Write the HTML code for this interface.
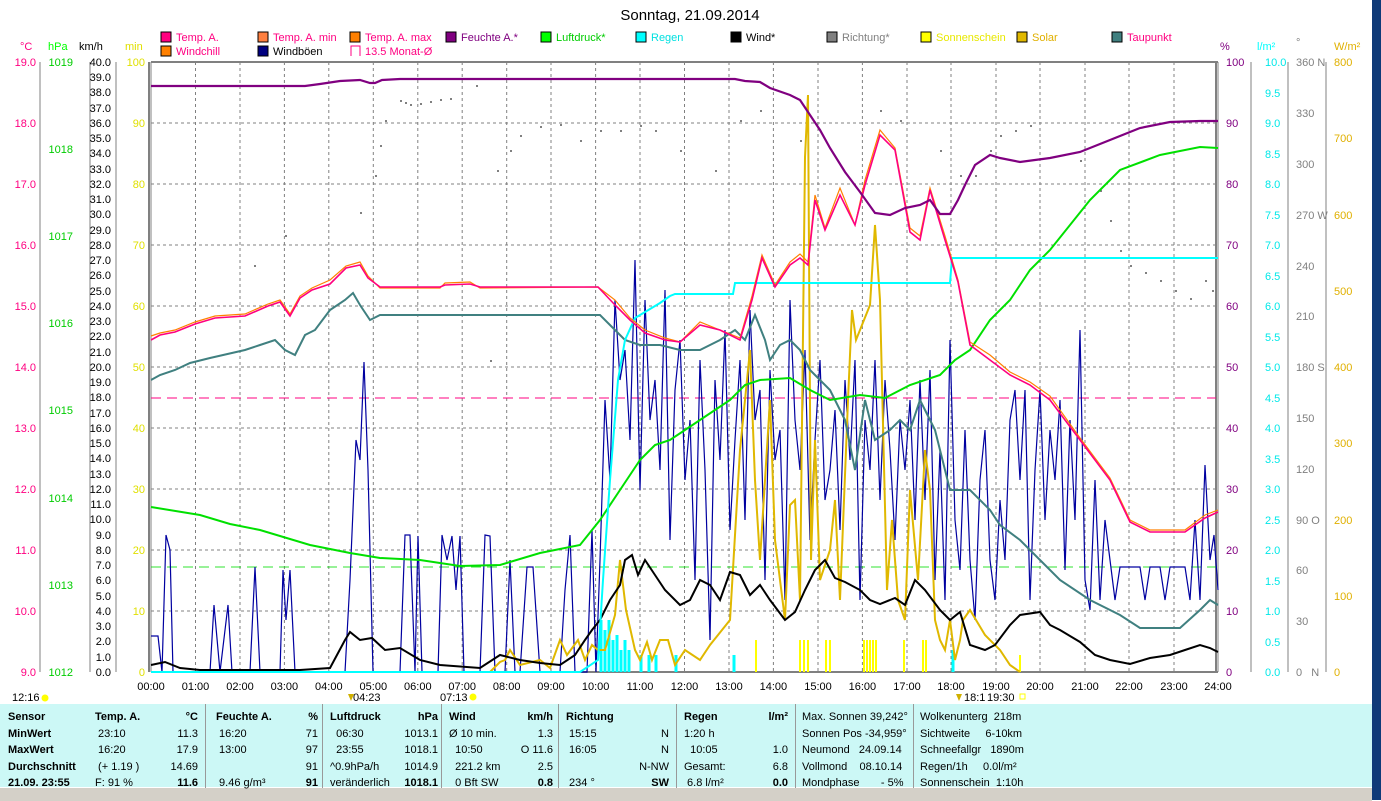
<!DOCTYPE html>
<html><head><meta charset="utf-8"><style>
body{margin:0;width:1381px;height:800px;background:#fff;overflow:hidden;position:relative;font-family:"Liberation Sans",sans-serif}
svg{position:absolute;left:0;top:0}
.t{position:absolute;font-size:11px;white-space:nowrap;line-height:16.5px}
.b{font-weight:bold}
</style></head><body>
<div style="position:absolute;left:0;top:704px;width:1372px;height:84px;background:#ccf8f6"></div>
<div style="position:absolute;left:0;top:787px;width:1372px;height:13px;background:#d4d0c8;border-top:1px solid #fff"></div>
<svg width="1381" height="800" font-family="Liberation Sans, sans-serif" font-size="11">
<rect x="1372" y="0" width="9" height="800" fill="#0f3a78"/>
<text x="690" y="20" font-size="15" text-anchor="middle">Sonntag, 21.09.2014</text>
<g font-size="11">
<rect x="161" y="32" width="10" height="10" fill="#ff0080" stroke="#000"/><text x="176" y="41" fill="#ff0080">Temp. A.</text>
<rect x="258" y="32" width="10" height="10" fill="#ff8040" stroke="#000"/><text x="273" y="41" fill="#ff0080">Temp. A. min</text>
<rect x="350" y="32" width="10" height="10" fill="#ff8000" stroke="#000"/><text x="365" y="41" fill="#ff0080">Temp. A. max</text>
<rect x="446" y="32" width="10" height="10" fill="#800080" stroke="#000"/><text x="461" y="41" fill="#800080">Feuchte A.*</text>
<rect x="541" y="32" width="10" height="10" fill="#00ff00" stroke="#000"/><text x="556" y="41" fill="#00cc00">Luftdruck*</text>
<rect x="636" y="32" width="10" height="10" fill="#00ffff" stroke="#000"/><text x="651" y="41" fill="#00e0e0">Regen</text>
<rect x="731" y="32" width="10" height="10" fill="#000" stroke="#000"/><text x="746" y="41">Wind*</text>
<rect x="827" y="32" width="10" height="10" fill="#808080" stroke="#000"/><text x="842" y="41" fill="#808080">Richtung*</text>
<rect x="921" y="32" width="10" height="10" fill="#ffff00" stroke="#000"/><text x="936" y="41" fill="#e8e800">Sonnenschein</text>
<rect x="1017" y="32" width="10" height="10" fill="#e0b800" stroke="#000"/><text x="1032" y="41" fill="#e0b000">Solar</text>
<rect x="1112" y="32" width="10" height="10" fill="#408080" stroke="#000"/><text x="1127" y="41" fill="#ff0080">Taupunkt</text>
<rect x="161" y="46" width="10" height="10" fill="#ff8000" stroke="#000"/><text x="176" y="55" fill="#ff0080">Windchill</text>
<rect x="258" y="46" width="10" height="10" fill="#000080" stroke="#000"/><text x="273" y="55">Windböen</text>
<path d="M351 56V46h9v10" fill="none" stroke="#ff0080"/><text x="365" y="55" fill="#ff0080">13.5 Monat-Ø</text>
</g>
<text x="20" y="50" fill="#ff0080">°C</text><text x="48" y="50" fill="#00ff00">hPa</text><text x="79" y="50">km/h</text><text x="125" y="50" fill="#e0e000">min</text>
<text x="1220" y="50" fill="#800080">%</text><text x="1257" y="50" fill="#00ffff">l/m²</text><text x="1296" y="46" fill="#808080">°</text><text x="1334" y="50" fill="#e0b000">W/m²</text>
<g stroke="#808080" fill="none">
<path d="M40 62V672M90 62V672M116 62V672M151 62V672M1218 62V672M1251 62V672M1288 62V672M1326 62V672"/>
<path d="M151 62H1218M151 672H1218M149 62V672M1216 62V672" stroke-width="2"/>
</g>
<g stroke="#808080" stroke-dasharray="3,3" fill="none">
<path d="M151 123H1216M151 184H1216M151 245H1216M151 306H1216M151 367H1216M151 428H1216M151 489H1216M151 550H1216M151 611H1216"/>
<path d="M195.5 62V672M240 62V672M284.4 62V672M328.8 62V672M373.3 62V672M417.8 62V672M462.2 62V672M506.7 62V672M551 62V672M595.6 62V672M640 62V672M684.5 62V672M729 62V672M773.4 62V672M818 62V672M862.4 62V672M907 62V672M951 62V672M996 62V672M1040 62V672M1085 62V672M1129 62V672M1174 62V672"/>
</g>
<path d="M151 398H1216" stroke="#ff0080" stroke-dasharray="10,6"/>
<path d="M151 567H1216" stroke="#00dd00" stroke-dasharray="10,6" opacity=".8"/>
<g font-size="11" text-anchor="end">
<g fill="#ff0080"><text x="36" y="66">19.0</text><text x="36" y="127">18.0</text><text x="36" y="188">17.0</text><text x="36" y="249">16.0</text><text x="36" y="310">15.0</text><text x="36" y="371">14.0</text><text x="36" y="432">13.0</text><text x="36" y="493">12.0</text><text x="36" y="554">11.0</text><text x="36" y="615">10.0</text><text x="36" y="676">9.0</text></g>
<g fill="#00cc00"><text x="73" y="66">1019</text><text x="73" y="153">1018</text><text x="73" y="240">1017</text><text x="73" y="327">1016</text><text x="73" y="414">1015</text><text x="73" y="502">1014</text><text x="73" y="589">1013</text><text x="73" y="676">1012</text></g>
<g fill="#e0e000"><text x="145" y="66">100</text><text x="145" y="127">90</text><text x="145" y="188">80</text><text x="145" y="249">70</text><text x="145" y="310">60</text><text x="145" y="371">50</text><text x="145" y="432">40</text><text x="145" y="493">30</text><text x="145" y="554">20</text><text x="145" y="615">10</text><text x="145" y="676">0</text></g>
</g>
<g fill="#000" font-size="11" text-anchor="end">
<text x="111" y="66">40.0</text><text x="111" y="81">39.0</text><text x="111" y="96">38.0</text><text x="111" y="112">37.0</text><text x="111" y="127">36.0</text><text x="111" y="142">35.0</text><text x="111" y="157">34.0</text><text x="111" y="173">33.0</text><text x="111" y="188">32.0</text><text x="111" y="203">31.0</text><text x="111" y="218">30.0</text><text x="111" y="234">29.0</text><text x="111" y="249">28.0</text><text x="111" y="264">27.0</text><text x="111" y="279">26.0</text><text x="111" y="295">25.0</text><text x="111" y="310">24.0</text><text x="111" y="325">23.0</text><text x="111" y="340">22.0</text><text x="111" y="356">21.0</text><text x="111" y="371">20.0</text><text x="111" y="386">19.0</text><text x="111" y="401">18.0</text><text x="111" y="417">17.0</text><text x="111" y="432">16.0</text><text x="111" y="447">15.0</text><text x="111" y="462">14.0</text><text x="111" y="478">13.0</text><text x="111" y="493">12.0</text><text x="111" y="508">11.0</text><text x="111" y="523">10.0</text><text x="111" y="539">9.0</text><text x="111" y="554">8.0</text><text x="111" y="569">7.0</text><text x="111" y="584">6.0</text><text x="111" y="600">5.0</text><text x="111" y="615">4.0</text><text x="111" y="630">3.0</text><text x="111" y="645">2.0</text><text x="111" y="661">1.0</text><text x="111" y="676">0.0</text>
</g>
<g font-size="11">
<g fill="#800080"><text x="1226" y="66">100</text><text x="1226" y="127">90</text><text x="1226" y="188">80</text><text x="1226" y="249">70</text><text x="1226" y="310">60</text><text x="1226" y="371">50</text><text x="1226" y="432">40</text><text x="1226" y="493">30</text><text x="1226" y="554">20</text><text x="1226" y="615">10</text><text x="1226" y="676">0</text></g>
<g fill="#00e8e8"><text x="1265" y="66">10.0</text><text x="1265" y="97">9.5</text><text x="1265" y="127">9.0</text><text x="1265" y="158">8.5</text><text x="1265" y="188">8.0</text><text x="1265" y="219">7.5</text><text x="1265" y="249">7.0</text><text x="1265" y="280">6.5</text><text x="1265" y="310">6.0</text><text x="1265" y="341">5.5</text><text x="1265" y="371">5.0</text><text x="1265" y="402">4.5</text><text x="1265" y="432">4.0</text><text x="1265" y="463">3.5</text><text x="1265" y="493">3.0</text><text x="1265" y="524">2.5</text><text x="1265" y="554">2.0</text><text x="1265" y="585">1.5</text><text x="1265" y="615">1.0</text><text x="1265" y="646">0.5</text><text x="1265" y="676">0.0</text></g>
<g fill="#808080"><text x="1296" y="66">360 N</text><text x="1296" y="117">330</text><text x="1296" y="168">300</text><text x="1296" y="219">270 W</text><text x="1296" y="270">240</text><text x="1296" y="320">210</text><text x="1296" y="371">180 S</text><text x="1296" y="422">150</text><text x="1296" y="473">120</text><text x="1296" y="524">90 O</text><text x="1296" y="574">60</text><text x="1296" y="625">30</text><text x="1296" y="676">0 &#160; N</text></g>
<g fill="#e0b000"><text x="1334" y="66">800</text><text x="1334" y="142">700</text><text x="1334" y="219">600</text><text x="1334" y="295">500</text><text x="1334" y="371">400</text><text x="1334" y="447">300</text><text x="1334" y="524">200</text><text x="1334" y="600">100</text><text x="1334" y="676">0</text></g>
</g>
<g font-size="11" text-anchor="middle">
<text x="151" y="690">00:00</text><text x="195.5" y="690">01:00</text><text x="240" y="690">02:00</text><text x="284.4" y="690">03:00</text><text x="328.8" y="690">04:00</text><text x="373.3" y="690">05:00</text><text x="417.8" y="690">06:00</text><text x="462.2" y="690">07:00</text><text x="506.7" y="690">08:00</text><text x="551" y="690">09:00</text><text x="595.6" y="690">10:00</text><text x="640" y="690">11:00</text><text x="684.5" y="690">12:00</text><text x="729" y="690">13:00</text><text x="773.4" y="690">14:00</text><text x="818" y="690">15:00</text><text x="862.4" y="690">16:00</text><text x="907" y="690">17:00</text><text x="951" y="690">18:00</text><text x="996" y="690">19:00</text><text x="1040" y="690">20:00</text><text x="1085" y="690">21:00</text><text x="1129" y="690">22:00</text><text x="1174" y="690">23:00</text><text x="1218" y="690">24:00</text>
</g>
<g font-size="11">
<text x="12" y="701">12:16</text><circle cx="45" cy="698" r="3.5" fill="#ff0"/>
<text x="353" y="701">04:23</text><text x="440" y="701">07:13</text><circle cx="473" cy="697" r="3.5" fill="#ff0"/>
<text x="964" y="701">18:1</text><text x="987" y="701">19:30</text><rect x="1020" y="694" width="5" height="5" fill="none" stroke="#ff0"/>
<path d="M348 694l3 7 3-7z M956 694l3 7 3-7z" fill="#d0b000"/>
</g>
<g fill="#808080">
<rect x="400" y="100" width="2" height="2"/><rect x="405" y="102" width="2" height="2"/><rect x="410" y="104" width="2" height="2"/><rect x="420" y="103" width="2" height="2"/><rect x="430" y="101" width="2" height="2"/><rect x="440" y="99" width="2" height="2"/><rect x="450" y="98" width="2" height="2"/><rect x="476" y="85" width="2" height="2"/><rect x="385" y="120" width="2" height="2"/><rect x="380" y="145" width="2" height="2"/><rect x="375" y="175" width="2" height="2"/><rect x="360" y="212" width="2" height="2"/><rect x="254" y="265" width="2" height="2"/><rect x="285" y="235" width="2" height="2"/><rect x="497" y="170" width="2" height="2"/><rect x="510" y="150" width="2" height="2"/><rect x="520" y="135" width="2" height="2"/><rect x="540" y="126" width="2" height="2"/><rect x="560" y="124" width="2" height="2"/><rect x="580" y="140" width="2" height="2"/><rect x="600" y="130" width="2" height="2"/><rect x="620" y="130" width="2" height="2"/><rect x="640" y="125" width="2" height="2"/><rect x="655" y="130" width="2" height="2"/><rect x="680" y="150" width="2" height="2"/><rect x="715" y="170" width="2" height="2"/><rect x="740" y="120" width="2" height="2"/><rect x="760" y="110" width="2" height="2"/><rect x="800" y="140" width="2" height="2"/><rect x="880" y="110" width="2" height="2"/><rect x="900" y="120" width="2" height="2"/><rect x="940" y="150" width="2" height="2"/><rect x="960" y="175" width="2" height="2"/><rect x="975" y="175" width="2" height="2"/><rect x="990" y="150" width="2" height="2"/><rect x="1000" y="135" width="2" height="2"/><rect x="1015" y="130" width="2" height="2"/><rect x="1030" y="125" width="2" height="2"/><rect x="1080" y="160" width="2" height="2"/><rect x="1100" y="190" width="2" height="2"/><rect x="1110" y="220" width="2" height="2"/><rect x="1120" y="250" width="2" height="2"/><rect x="1130" y="265" width="2" height="2"/><rect x="1145" y="272" width="2" height="2"/><rect x="1160" y="280" width="2" height="2"/><rect x="1175" y="290" width="2" height="2"/><rect x="1190" y="298" width="2" height="2"/><rect x="1205" y="280" width="2" height="2"/><rect x="1212" y="290" width="2" height="2"/><rect x="490" y="360" width="2" height="2"/>
</g>
<g stroke="#ffff00" stroke-width="2">
<path d="M756 640V672M800 640V672M804 640V672M808 640V672M826 640V672M830 640V672M864 640V672M867 640V672M870 640V672M873 640V672M876 640V672M904 640V672M923 640V672M926 640V672M1020 655V672"/>
</g>
<g stroke="#00ffff" stroke-width="3">
<path d="M601 620V672M605 630V672M609 620V672M613 640V672M617 635V672M621 650V672M625 640V672M629 650V672M641 655V672M649 655V672M656 655V672M676 655V672M734 655V672M953 650V672"/>
</g>
<polyline fill="none" stroke="#0000a0" stroke-width="1.2" points="151,636 158,636 162,672 166,535 170,550 173,672 210,672 214,605 220,672 228,605 232,672 250,672 255,567 260,672 280,672 283,570 286,620 290,570 295,672 345,672 350,580 356,440 360,460 364,362 368,470 373,672 400,672 405,535 410,535 415,672 418,536 422,672 438,672 442,535 447,560 452,536 456,590 460,536 464,672 480,672 485,535 490,536 495,672 505,672 510,560 515,672 520,672 527,567 533,567 540,672 560,672 565,590 570,535 575,672 587,672 592,530 596,672 600,560 605,400 610,480 615,300 620,380 625,350 630,440 635,260 640,490 645,300 650,420 655,380 660,470 665,290 670,540 675,390 680,340 685,480 690,420 695,580 700,360 705,470 710,640 715,380 720,460 725,330 730,530 735,440 740,360 745,520 750,310 755,420 760,390 765,580 770,370 775,460 780,430 785,600 790,300 795,420 800,470 805,350 810,540 815,440 820,360 825,500 830,470 835,410 840,530 845,380 850,460 855,360 860,600 865,420 870,470 875,360 880,500 885,380 890,450 895,540 900,420 905,470 910,400 915,520 920,380 925,500 930,370 935,580 940,450 945,600 950,340 955,520 960,570 965,430 970,560 975,620 980,480 985,430 990,560 995,600 1000,500 1005,560 1010,420 1015,390 1020,480 1025,390 1030,600 1035,470 1040,390 1045,520 1050,430 1055,480 1060,400 1065,570 1070,420 1075,520 1080,330 1085,580 1090,610 1095,480 1100,600 1105,520 1110,560 1115,600 1120,567 1140,567 1145,600 1150,567 1160,567 1165,600 1170,567 1185,567 1190,600 1195,520 1200,600 1205,465 1210,560 1214,535 1218,590"/>
<polyline fill="none" stroke="#e0b800" stroke-width="2" points="490,672 500,662 505,660 510,650 520,665 540,660 550,668 560,640 567,655 578,640 585,660 592,645 598,650 605,650 615,615 620,560 626,610 635,650 640,660 647,642 652,660 660,640 668,640 675,665 685,650 700,660 710,645 730,620 740,450 750,350 755,480 760,560 770,400 775,540 785,620 790,505 795,500 800,600 805,157 808,95 811,560 815,440 820,580 830,550 835,500 840,600 848,400 852,310 856,340 870,305 875,225 880,300 887,590 892,520 898,600 905,620 910,490 918,580 925,450 930,490 935,620 940,640 945,650 950,620 955,660 960,640 963,620 970,610 985,635 1000,650 1010,665 1020,672"/>
<polyline fill="none" stroke="#408080" stroke-width="2" points="151,380 160,375 175,370 190,363 210,358 245,350 260,345 275,340 285,350 295,355 305,335 315,330 330,310 345,300 353,293 360,305 370,320 380,315 600,315 615,330 625,340 640,345 660,345 680,350 700,350 720,340 735,330 745,340 755,315 765,340 770,360 780,345 790,340 800,350 810,370 820,380 830,390 845,420 855,470 865,400 875,440 890,430 900,420 910,430 920,400 935,430 950,490 970,490 990,510 1000,525 1020,540 1040,560 1060,580 1090,600 1120,615 1140,628 1180,628 1200,610 1210,600 1218,605"/>
<polyline fill="none" stroke="#00e000" stroke-width="2" points="151,507 200,515 230,524 260,530 310,545 350,553 380,558 420,560 460,566 500,565 540,553 580,545 600,520 620,490 640,460 655,445 670,440 700,420 730,400 745,385 760,380 790,378 810,390 830,400 860,395 885,398 910,385 940,375 955,360 970,350 990,320 1010,300 1030,270 1050,250 1090,200 1120,170 1160,155 1200,147 1218,148"/>
<polyline fill="none" stroke="#000" stroke-width="2" points="151,665 165,662 180,668 200,670 300,670 330,668 345,640 350,632 360,640 372,638 385,650 400,648 420,660 440,665 480,668 500,655 520,660 540,663 560,665 575,655 585,640 592,630 600,620 610,600 620,585 625,560 632,555 638,575 645,560 655,575 665,590 680,605 690,600 700,580 710,585 720,600 730,572 740,575 750,595 760,585 770,600 785,620 795,612 805,590 815,570 825,560 835,578 845,582 860,590 870,600 880,604 895,598 905,605 915,580 925,590 940,610 950,620 960,612 970,645 985,650 995,645 1010,625 1020,615 1040,612 1050,625 1060,630 1080,642 1095,655 1110,660 1130,664 1150,658 1170,655 1185,650 1200,645 1210,648 1218,652"/>
<polyline fill="none" stroke="#00ffff" stroke-width="2" points="151,672 580,672 598,660 603,580 610,480 618,380 625,340 635,318 645,312 660,303 670,296 675,294 733,294 735,283 950,283 952,258 1218,258"/>
<polyline fill="none" stroke="#ff8000" stroke-width="1.2" points="151,336 160,333 175,330 195,322 215,316 245,314 268,304 280,300 290,314 300,296 312,288 330,280 346,266 360,262 368,276 380,288 440,288 445,283 470,282 480,288 598,287 615,300 630,318 645,330 665,338 680,342 700,322 720,330 740,338 752,296 762,255 775,285 790,262 800,254 808,262 815,195 825,228 840,188 855,225 865,180 880,130 895,148 910,228 920,236 930,188 945,236 958,280 970,342 990,355 1010,372 1030,382 1050,396 1080,438 1110,478 1130,520 1150,530 1185,530 1205,515 1218,510"/>
<polyline fill="none" stroke="#ff0080" stroke-width="1.6" points="151,340 160,335 175,332 195,324 215,318 245,316 268,306 280,302 290,316 300,298 312,290 330,284 346,268 360,265 368,278 380,287 440,287 445,285 470,284 480,287 598,287 615,305 630,320 645,333 665,340 680,342 700,325 720,330 740,340 752,300 762,258 775,287 790,265 800,258 808,265 815,200 825,230 840,195 855,225 865,185 880,135 895,150 910,232 920,240 930,190 945,240 958,282 970,345 990,360 1010,375 1030,385 1050,400 1080,440 1110,480 1130,522 1150,532 1185,532 1205,518 1218,512"/>
<polyline fill="none" stroke="#800080" stroke-width="2.2" points="151,86 305,86 320,84 340,81 360,80 370,83 375,83 382,80 400,79 735,79 745,81 760,82 770,88 790,95 800,100 810,115 820,130 830,148 845,172 860,192 875,213 890,215 905,208 920,205 930,200 940,214 950,214 958,200 965,185 975,165 990,155 1000,158 1020,162 1050,158 1080,152 1110,140 1140,128 1170,122 1200,121 1218,121"/>
</svg>
<div style="position:absolute;top:704px;height:84px;width:1px;background:#999;left:205px"></div>
<div style="position:absolute;top:704px;height:84px;width:1px;background:#999;left:322px"></div>
<div style="position:absolute;top:704px;height:84px;width:1px;background:#999;left:441px"></div>
<div style="position:absolute;top:704px;height:84px;width:1px;background:#999;left:558px"></div>
<div style="position:absolute;top:704px;height:84px;width:1px;background:#999;left:676px"></div>
<div style="position:absolute;top:704px;height:84px;width:1px;background:#999;left:795px"></div>
<div style="position:absolute;top:704px;height:84px;width:1px;background:#999;left:913px"></div>
<div class="t b" style="left:8px;top:709px">Sensor<br>MinWert<br>MaxWert<br>Durchschnitt<br>21.09. 23:55</div>
<div class="t" style="left:95px;top:709px"><b>Temp. A.</b><br>&nbsp;23:10<br>&nbsp;16:20<br>&nbsp;(+ 1.19 )<br>F: 91 %</div>
<div class="t" style="left:150px;width:48px;text-align:right;top:709px"><b>°C</b><br>11.3<br>17.9<br>14.69<br><b>11.6</b></div>
<div class="t" style="left:216px;top:709px"><b>Feuchte A.</b><br>&nbsp;16:20<br>&nbsp;13:00<br>&nbsp;<br>&nbsp;9.46 g/m³</div>
<div class="t" style="left:270px;width:48px;text-align:right;top:709px"><b>%</b><br>71<br>97<br>91<br><b>91</b></div>
<div class="t" style="left:330px;top:709px"><b>Luftdruck</b><br>&nbsp;&nbsp;06:30<br>&nbsp;&nbsp;23:55<br>^0.9hPa/h<br>veränderlich</div>
<div class="t" style="left:388px;width:50px;text-align:right;top:709px"><b>hPa</b><br>1013.1<br>1018.1<br>1014.9<br><b>1018.1</b></div>
<div class="t" style="left:449px;top:709px"><b>Wind</b><br>Ø 10 min.<br>&nbsp;&nbsp;10:50<br>&nbsp;&nbsp;221.2 km<br>&nbsp;&nbsp;0 Bft SW</div>
<div class="t" style="left:505px;width:48px;text-align:right;top:709px"><b>km/h</b><br>1.3<br>O 11.6<br>2.5<br><b>0.8</b></div>
<div class="t" style="left:566px;top:709px"><b>Richtung</b><br>&nbsp;15:15<br>&nbsp;16:05<br>&nbsp;<br>&nbsp;234 °</div>
<div class="t" style="left:620px;width:49px;text-align:right;top:709px">&nbsp;<br>N<br>N<br>N-NW<br><b>SW</b></div>
<div class="t" style="left:684px;top:709px"><b>Regen</b><br>1:20 h<br>&nbsp;&nbsp;10:05<br>Gesamt:<br>&nbsp;6.8 l/m²</div>
<div class="t" style="left:740px;width:48px;text-align:right;top:709px"><b>l/m²</b><br>&nbsp;<br>1.0<br>6.8<br><b>0.0</b></div>
<div class="t" style="left:802px;top:709px">Max. Sonnen 39,242°<br>Sonnen Pos -34,959°<br>Neumond &nbsp;&nbsp;24.09.14<br>Vollmond &nbsp;&nbsp;&nbsp;08.10.14<br>Mondphase &nbsp;&nbsp;&nbsp;&nbsp;&nbsp;&nbsp;- 5%</div>
<div class="t" style="left:920px;top:709px">Wolkenunterg &nbsp;218m<br>Sichtweite &nbsp;&nbsp;&nbsp;&nbsp;6-10km<br>Schneefallgr &nbsp;&nbsp;1890m<br>Regen/1h &nbsp;&nbsp;&nbsp;&nbsp;0.0l/m²<br>Sonnenschein &nbsp;1:10h</div>
</body></html>
